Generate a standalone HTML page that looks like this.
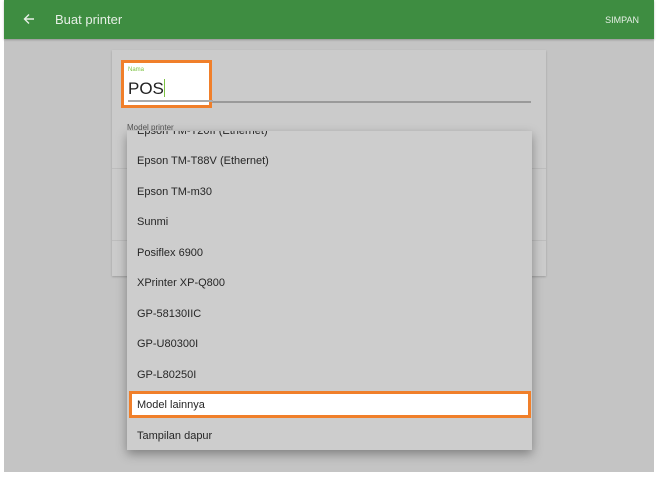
<!DOCTYPE html>
<html><head><style>
body{margin:0;width:658px;height:480px;background:#fff;font-family:"Liberation Sans",sans-serif;position:relative;overflow:hidden}
.frame{position:absolute;left:4px;top:0;width:650px;height:472px;background:#c4c4c4}
.hdr{position:absolute;left:0;top:0;width:650px;height:39px;background:#3e8d41;box-shadow:0 1px 2px rgba(0,0,0,.25)}
.card{position:absolute;left:108px;top:50px;width:434px;height:226px;background:#cbcbcb;box-shadow:0 1px 2px rgba(0,0,0,.2)}
.dd{position:absolute;left:123px;top:131px;width:405px;height:319px;background:#cdcdcd;box-shadow:0 4px 10px rgba(0,0,0,.35);overflow:hidden}
.it{position:absolute;left:10px;font-size:11px;color:#262626}
</style></head><body>
<div class="frame">
<div class="hdr">
<svg style="position:absolute;left:19px;top:13px" width="12" height="12" viewBox="0 0 12 12"><path d="M11 6H2M6 1.5L1.5 6L6 10.5" stroke="#e8f0e8" stroke-width="1.4" fill="none"/></svg>
<div style="position:absolute;left:51px;top:12px;color:#e6efe6;font-size:13px">Buat printer</div>
<div style="position:absolute;right:15px;top:15px;color:#e6efe6;font-size:9px">SIMPAN</div>
</div>
<div class="card">
<div style="position:absolute;left:0;top:118px;width:434px;height:1px;background:#bdbdbd"></div>
<div style="position:absolute;left:0;top:190px;width:434px;height:1px;background:#bdbdbd"></div>
<div style="position:absolute;left:15px;top:51px;width:404px;height:2px;background:#9a9a9a"></div>
<div style="position:absolute;left:15px;top:73px;font-size:8px;color:#555">Model printer</div>
</div>
<div style="position:absolute;left:117px;top:60px;width:85px;height:42px;background:#fff;border:3px solid #f07f2a"></div>
<div style="position:absolute;left:124px;top:67px;font-size:6px;color:#7cc242">Nama</div>
<div style="position:absolute;left:124px;top:79px;font-size:17px;color:#222">POS<span style="display:inline-block;width:1px;height:18px;background:#7cc242;vertical-align:-3px"></span></div>
<div style="position:absolute;left:124px;top:100px;width:85px;height:2px;background:#aaa"></div>
<div class="dd">
<div class="it" style="top:-6px">Epson TM-T20II (Ethernet)</div>
<div class="it" style="top:24px">Epson TM-T88V (Ethernet)</div>
<div class="it" style="top:55px">Epson TM-m30</div>
<div class="it" style="top:85px">Sunmi</div>
<div class="it" style="top:116px">Posiflex 6900</div>
<div class="it" style="top:146px">XPrinter XP-Q800</div>
<div class="it" style="top:177px">GP-58130IIC</div>
<div class="it" style="top:207px">GP-U80300I</div>
<div class="it" style="top:238px">GP-L80250I</div>
<div style="position:absolute;left:2px;top:260px;width:396px;height:21px;background:#fff;border:3px solid #f07f2a"></div>
<div class="it" style="top:268px">Model lainnya</div>
<div class="it" style="top:299px">Tampilan dapur</div>
</div>
</div>
</body></html>
